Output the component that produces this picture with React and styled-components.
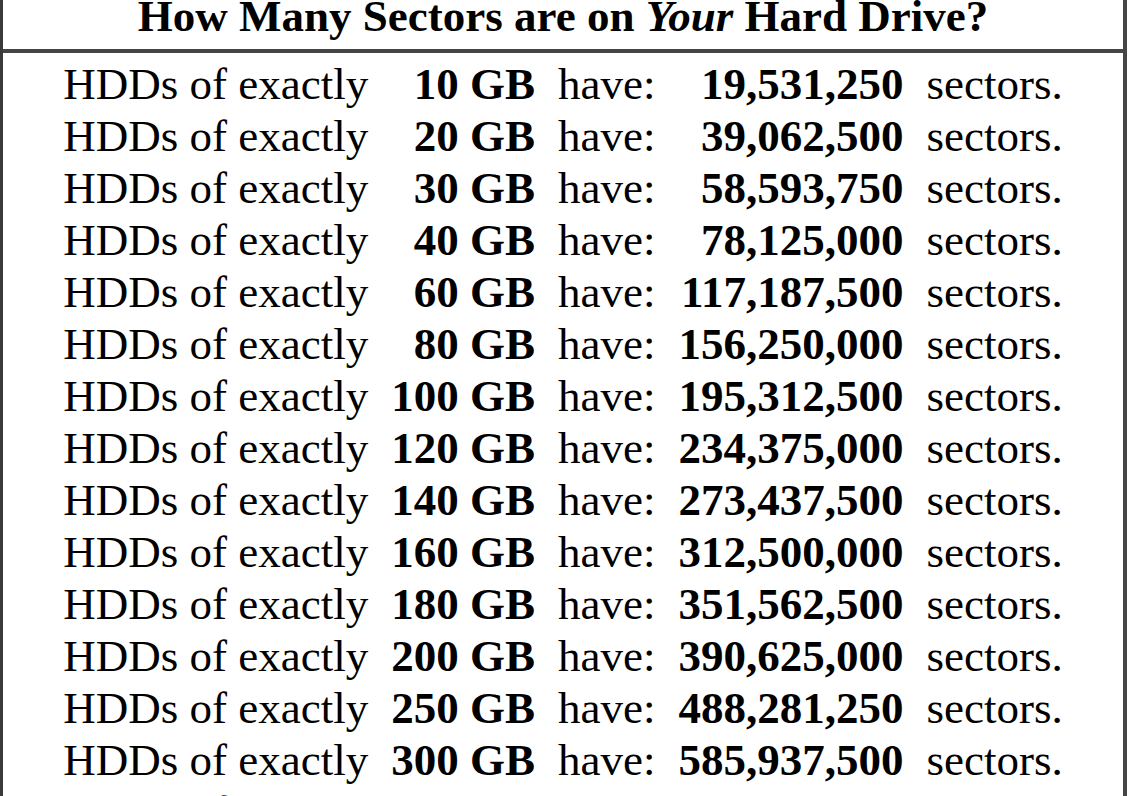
import React from 'react';
import styled, { createGlobalStyle } from 'styled-components';

const GlobalStyle = createGlobalStyle`
  html, body {
    margin: 0;
    padding: 0;
    background: #ffffff;
    overflow: hidden;
  }
  body {
    font-family: "Liberation Serif", "Times New Roman", serif;
    color: #000000;
  }
`;

const Table = styled.div`
  width: 1127px;
  box-sizing: border-box;
  margin-top: -14px;
  border-left: 3px solid #3a3a3a;
  border-right: 4px solid #454545;
  background: #ffffff;
`;

const Caption = styled.div`
  padding: 4px 0 7px;
  border-bottom: 4px solid #454545;
  text-align: center;
  font-size: 45px;
  line-height: 52px;
  font-weight: bold;
  white-space: nowrap;

  em {
    font-style: italic;
  }
`;

const Body = styled.div`
  padding-top: 5px;
`;

const Grid = styled.div`
  display: grid;
  grid-template-columns: repeat(5, auto);
  justify-content: center;
  column-gap: 23px;
  font-size: 45px;
  line-height: 52px;
`;

const Cell = styled.span`
  white-space: nowrap;
  font-weight: ${(p) => (p.$bold ? 'bold' : 'normal')};
  text-align: ${(p) => p.$align || 'left'};
`;

const sizes = [10, 20, 30, 40, 60, 80, 100, 120, 140, 160, 180, 200, 250, 300, 400];

// 1 GB = 10^9 bytes, 512-byte sectors
const sectors = (gb) => (gb * 1953125).toLocaleString('en-US');

const App = () => {
  return (
    <>
      <GlobalStyle />
      <Table>
        <Caption>
          How Many Sectors are on <em>Your</em> Hard Drive?
        </Caption>
        <Body>
          <Grid>
            {sizes.map((gb) => (
              <React.Fragment key={gb}>
                <Cell>HDDs of exactly</Cell>
                <Cell $bold $align="right">{gb} GB</Cell>
                <Cell>have:</Cell>
                <Cell $bold $align="right">{sectors(gb)}</Cell>
                <Cell>sectors.</Cell>
              </React.Fragment>
            ))}
          </Grid>
        </Body>
      </Table>
    </>
  );
};

export default App;
